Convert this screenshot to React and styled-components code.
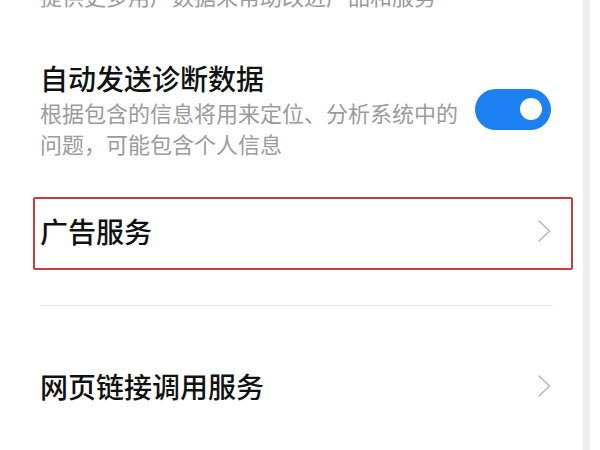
import React from "react";
import styled, { createGlobalStyle } from "styled-components";

const Global = createGlobalStyle`
  html, body { margin: 0; padding: 0; background: #ffffff; }
  body { font-family: "Noto Sans CJK SC", "Noto Sans", sans-serif; overflow: hidden; }
`;

const Page = styled.div`
  display: flex;
  width: 600px;
  height: 450px;
  overflow: hidden;
  background: #ffffff;
`;

const Main = styled.div`
  width: 583px;
  flex: none;
  box-sizing: border-box;
  padding: 0 32px 0 40px;
  display: flex;
  flex-direction: column;
`;

const Strip = styled.div`
  width: 7px;
  flex: none;
  background: #eeeeee;
`;

const Desc = styled.div`
  font-size: 22px;
  line-height: 31px;
  color: #9b9b9b;
  white-space: nowrap;
`;

const TopDesc = styled(Desc)`
  margin-top: -20px;
`;

const ToggleRow = styled.div`
  margin-top: 50px;
  display: flex;
  align-items: center;
  justify-content: space-between;
`;

const TextBlock = styled.div`
  display: flex;
  flex-direction: column;
`;

const Title = styled.div`
  font-size: 28px;
  line-height: 34px;
  font-weight: 500;
  color: #111111;
  white-space: nowrap;
  margin-bottom: ${(p) => p.$gap || 0}px;
`;

const Switch = styled.div`
  width: 76px;
  height: 41px;
  border-radius: 21px;
  background: #1c80f2;
  position: relative;
  flex: none;
  margin-top: -2px;
`;

const Knob = styled.div`
  position: absolute;
  width: 22px;
  height: 22px;
  border-radius: 50%;
  background: #ffffff;
  right: 9px;
  top: 50%;
  transform: translateY(-50%);
`;

const Highlight = styled.div`
  margin: 38px -22px 0 -7px;
  border: 2px solid #c4403a;
  border-radius: 2px;
  padding: 0 20px 0 5px;
`;

const NavRow = styled.div`
  height: ${(p) => p.$h}px;
  display: flex;
  align-items: center;
  justify-content: space-between;
  margin-top: ${(p) => p.$mt || 0}px;
  padding-bottom: ${(p) => p.$pb || 0}px;
  box-sizing: border-box;
`;

const Divider = styled.div`
  margin-top: 35px;
  margin-right: -2px;
  height: 1px;
  background: #e6e6e6;
`;

const Chevron = () => (
  <svg width="14" height="24" viewBox="0 0 14 24" style={{ flex: "none" }}>
    <polyline
      points="2,2 12.5,12 2,22"
      fill="none"
      stroke="#b8b8b8"
      strokeWidth="1.6"
      strokeLinecap="round"
      strokeLinejoin="round"
    />
  </svg>
);

export default function App() {
  return (
    <Page>
      <Global />
      <Main>
        <TopDesc>提供更多用户数据来帮助改进产品和服务</TopDesc>
        <ToggleRow>
          <TextBlock>
            <Title $gap={2}>自动发送诊断数据</Title>
            <Desc>根据包含的信息将用来定位、分析系统中的</Desc>
            <Desc>问题，可能包含个人信息</Desc>
          </TextBlock>
          <Switch>
            <Knob />
          </Switch>
        </ToggleRow>
        <Highlight>
          <NavRow $h={69} $pb={5}>
            <Title>广告服务</Title>
            <Chevron />
          </NavRow>
        </Highlight>
        <Divider />
        <NavRow $h={73} $mt={43}>
          <Title>网页链接调用服务</Title>
          <Chevron />
        </NavRow>
      </Main>
      <Strip />
    </Page>
  );
}
